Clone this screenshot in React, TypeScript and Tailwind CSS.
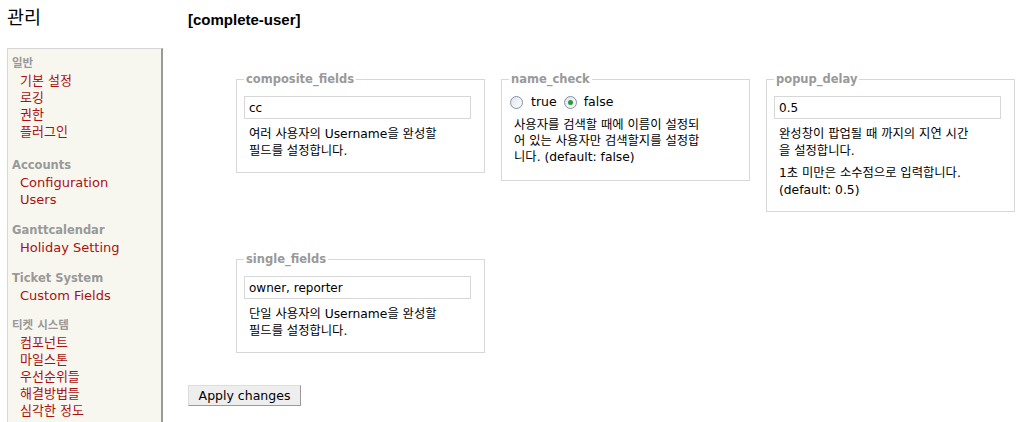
const body = "font-['DejaVu_Sans','Noto_Sans_CJK_KR',sans-serif]";

type Group = { title: string; mt: string; items: string[] };

const groups: Group[] = [
  { title: "일반", mt: "mt-0", items: ["기본 설정", "로깅", "권한", "플러그인"] },
  { title: "Accounts", mt: "mt-[17px]", items: ["Configuration", "Users"] },
  { title: "Ganttcalendar", mt: "mt-[14px]", items: ["Holiday Setting"] },
  { title: "Ticket System", mt: "mt-[14px]", items: ["Custom Fields"] },
  {
    title: "티켓 시스템",
    mt: "mt-[13px]",
    items: ["컴포넌트", "마일스톤", "우선순위들", "해결방법들", "심각한 정도"],
  },
];

const Sidebar = () => (
  <div className="mt-[19px] w-[156px] border-l border-t border-r-2 border-l-[#d7d7d7] border-t-[#d7d7d7] border-r-[#999] bg-[#f7f7f0] pt-[6px] pb-[30px]">
    {groups.map((g) => (
      <div key={g.title} className={g.mt}>
        <div className="pl-[4px] text-[11.5px] font-bold leading-[17px] text-[#999]">{g.title}</div>
        {g.items.map((it) => (
          <div key={it} className="whitespace-nowrap pl-[12px] text-[13px] leading-[17px] text-[#a11]">
            {it}
          </div>
        ))}
      </div>
    ))}
  </div>
);

const Field = ({
  legend,
  children,
}: {
  legend: string;
  children: React.ReactNode;
}) => (
  <fieldset className="w-[249px] border border-[#d7d7d7] pl-[7px] pt-[10px] pb-[12px]">
    <legend className="px-[2px] text-[11.5px] font-bold leading-[14px] text-[#999]">{legend}</legend>
    {children}
  </fieldset>
);

const TextInput = ({ value }: { value: string }) => (
  <input
    readOnly
    defaultValue={value}
    className="block h-[23px] w-[227px] border border-[#d7d7d7] bg-white px-[4px] text-[12px] text-black outline-none"
  />
);

const Help = ({ lines, className = "mt-[7px] leading-[17px]" }: { lines: string[]; className?: string }) => (
  <div className={`${className} whitespace-nowrap pl-[5px] text-[12.3px] text-black`}>
    {lines.map((l) => (
      <div key={l}>{l}</div>
    ))}
  </div>
);

const Radio = ({ checked }: { checked?: boolean }) => (
  <span className="flex h-[13px] w-[13px] items-center justify-center rounded-full border border-[#7f91aa] bg-gradient-to-br from-[#dfe3ea] to-white">
    {checked && <span className="h-[5px] w-[5px] rounded-full bg-[#2f9a2f]" />}
  </span>
);

export default function App() {
  return (
    <div className={`${body} flex h-[422px] overflow-hidden bg-white text-black`}>
      <div className="pl-[7px]">
        <h1 className="mt-[7px] h-[22px] font-['Liberation_Sans','Noto_Sans_CJK_KR',sans-serif] text-[18.5px] leading-[22px] font-normal">
          관리
        </h1>
        <Sidebar />
      </div>

      <div className="ml-[25px] flex-1">
        <h2 className="mt-[11px] font-['Liberation_Sans',sans-serif] text-[15px] leading-[18px] font-bold">
          [complete-user]
        </h2>

        <div className="mt-[43px] ml-[48px] flex w-[780px] flex-wrap items-start gap-x-4 gap-y-[40px]">
          <Field legend="composite_fields">
            <TextInput value="cc" />
            <Help lines={["여러 사용자의 Username을 완성할", "필드를 설정합니다."]} />
          </Field>

          <Field legend="name_check">
            <div className="-mt-[2px] flex h-[17px] items-center pl-[1px] text-[12.5px]">
              <Radio />
              <span className="ml-[8px] mr-[7px]">true</span>
              <Radio checked />
              <span className="ml-[7px]">false</span>
            </div>
            <Help
              className="mt-[6px] mb-[3px] leading-[16px]"
              lines={[
                "사용자를 검색할 때에 이름이 설정되",
                "어 있는 사용자만 검색할지를 설정합",
                "니다. (default: false)",
              ]}
            />
          </Field>

          <Field legend="popup_delay">
            <TextInput value="0.5" />
            <Help lines={["완성창이 팝업될 때 까지의 지연 시간", "을 설정합니다."]} />
            <Help
              className="mt-[5px] leading-[17px]"
              lines={["1초 미만은 소수점으로 입력합니다.", "(default: 0.5)"]}
            />
          </Field>

          <Field legend="single_fields">
            <TextInput value="owner, reporter" />
            <Help lines={["단일 사용자의 Username을 완성할", "필드를 설정합니다."]} />
          </Field>
        </div>

        <button className="mt-[32px] h-[21px] w-[113px] border border-t-[#ddd] border-l-[#ddd] border-r-[#999] border-b-[#999] bg-[#eee] text-[12.5px] leading-[19px] text-black">
          Apply changes
        </button>
      </div>
    </div>
  );
}
